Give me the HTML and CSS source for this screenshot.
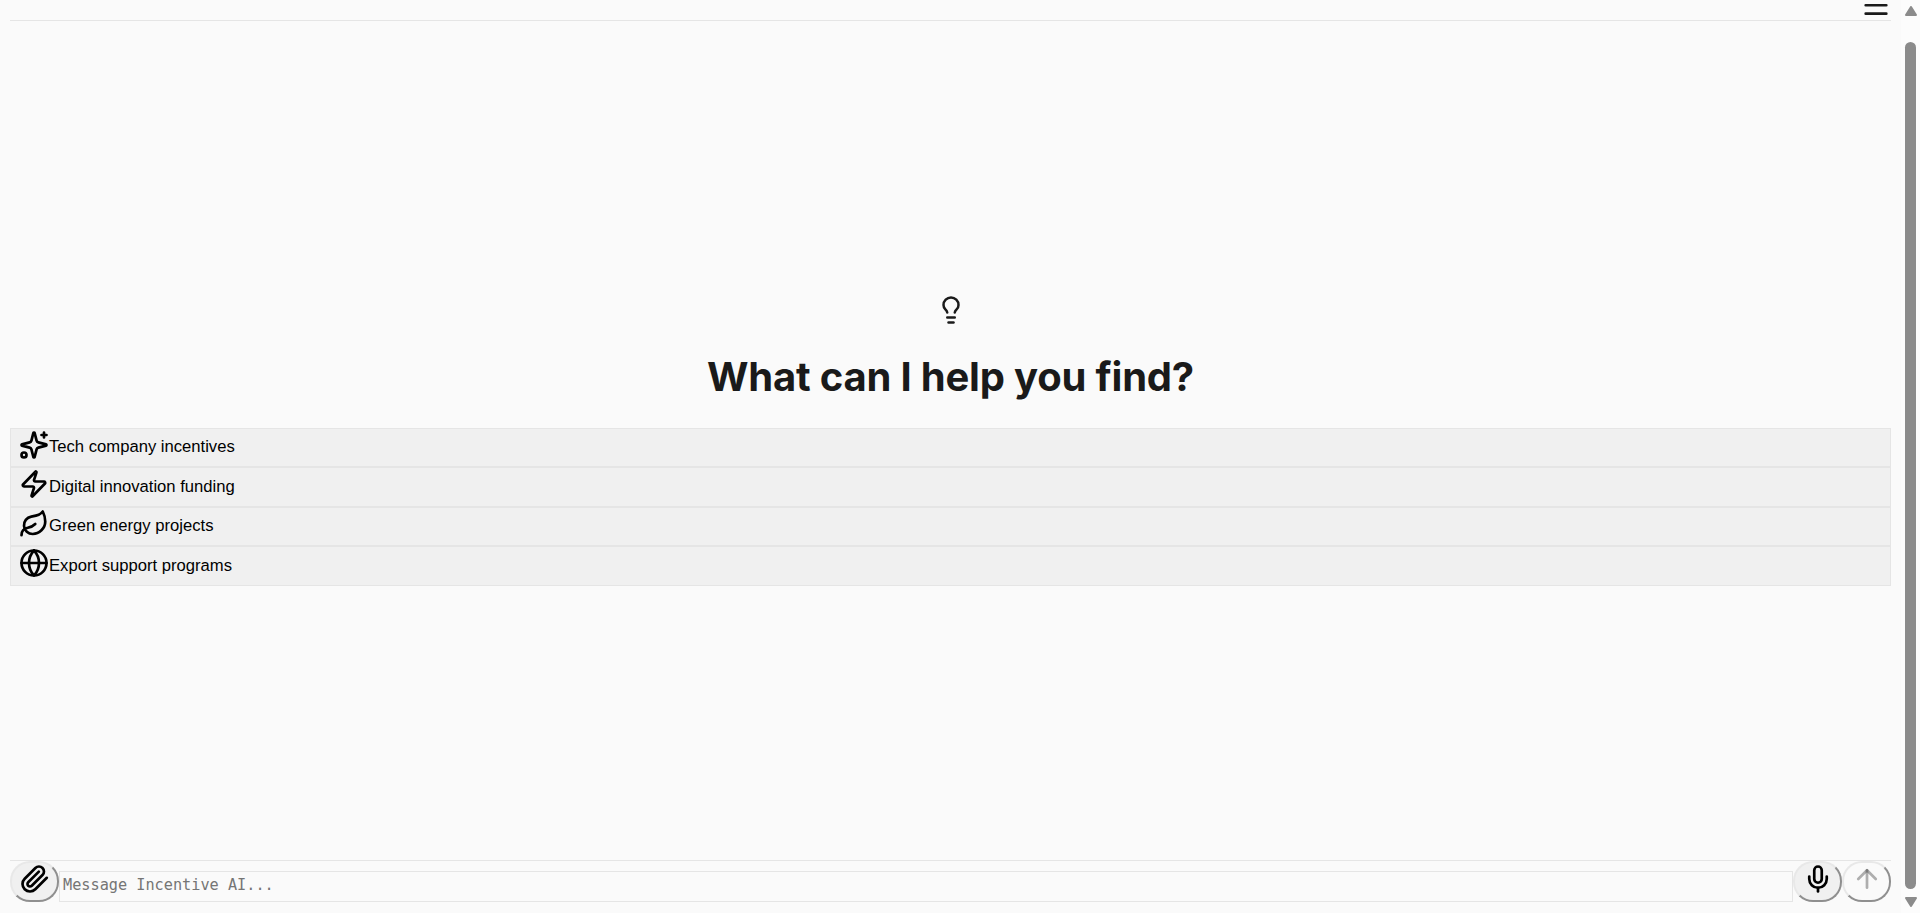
FILE: index.html
```html
<!DOCTYPE html>
<html lang="en">
<head>
<meta charset="utf-8">
<title>Incentive AI</title>
<link rel="stylesheet" href="styles.css">
</head>
<body>
<div class="page">
  <header class="topbar">
    <svg class="icon menu-icon" viewBox="0 0 24 24"><path d="M3.75 9h16.5m-16.5 6.75h16.5"/></svg>
  </header>
  <main class="welcome">
    <svg class="icon bulb" viewBox="0 0 24 24"><path d="M15 14c.2-1 .7-1.7 1.5-2.5 1-.9 1.5-2.2 1.5-3.5A6 6 0 0 0 6 8c0 1 .2 2.2 1.5 3.5.7.7 1.3 1.5 1.5 2.5"/><path d="M9 18h6"/><path d="M10 22h4"/></svg>
    <h1 class="title">What can I help you find?</h1>
    <div class="suggestions">
      <button class="suggestion"><svg class="icon" viewBox="0 0 24 24"><path d="M9.937 15.5A2 2 0 0 0 8.5 14.063l-6.135-1.582a.5.5 0 0 1 0-.962L8.5 9.936A2 2 0 0 0 9.937 8.5l1.582-6.135a.5.5 0 0 1 .963 0L14.063 8.5A2 2 0 0 0 15.5 9.937l6.135 1.581a.5.5 0 0 1 0 .964L15.5 14.063a2 2 0 0 0-1.437 1.437l-1.582 6.135a.5.5 0 0 1-.963 0z"/><path d="M20 2v4M22 4h-4"/><circle cx="4" cy="20" r="2"/></svg><span>Tech company incentives</span></button>
      <button class="suggestion suggestion-tall"><svg class="icon" viewBox="0 0 24 24"><path d="M4 14a1 1 0 0 1-.78-1.63l9.9-10.2a.5.5 0 0 1 .86.46l-1.92 6.02A1 1 0 0 0 13 10h7a1 1 0 0 1 .78 1.63l-9.9 10.2a.5.5 0 0 1-.86-.46l1.92-6.02A1 1 0 0 0 11 14z"/></svg><span>Digital innovation funding</span></button>
      <button class="suggestion"><svg class="icon" viewBox="0 0 24 24"><path d="M11 20A7 7 0 0 1 9.8 6.1C15.5 5 17 4.48 19 2c1 2 2 4.18 2 8 0 5.5-4.78 10-10 10Z"/><path d="M2 21c0-3 1.85-5.36 5.08-6C9.5 14.52 12 13 13 12"/></svg><span>Green energy projects</span></button>
      <button class="suggestion suggestion-tall"><svg class="icon" viewBox="0 0 24 24"><circle cx="12" cy="12" r="10"/><path d="M12 2a14.5 14.5 0 0 0 0 20 14.5 14.5 0 0 0 0-20"/><path d="M2 12h20"/></svg><span>Export support programs</span></button>
    </div>
  </main>
  <footer class="composer">
    <button class="round round-attach"><svg class="icon" viewBox="0 0 24 24"><path d="m21.44 11.05-9.19 9.19a6 6 0 0 1-8.49-8.49l8.57-8.57A4 4 0 1 1 18 8.84l-8.59 8.57a2 2 0 0 1-2.83-2.83l8.49-8.48"/></svg></button>
    <textarea class="message" rows="1" placeholder="Message Incentive AI..."></textarea>
    <button class="round"><svg class="icon" viewBox="0 0 24 24"><path d="M12 2a3 3 0 0 0-3 3v7a3 3 0 0 0 6 0V5a3 3 0 0 0-3-3Z"/><path d="M19 10v2a7 7 0 0 1-14 0v-2"/><path d="M12 19v3"/></svg></button>
    <button class="round round-send"><svg class="icon" viewBox="0 0 24 24"><path d="m5 12 7-7 7 7"/><path d="M12 19V5"/></svg></button>
  </footer>
</div>
<div class="scrollbar">
  <svg class="arrow arrow-up" viewBox="0 0 12 10"><path d="M6 1 11 9H1z"/></svg>
  <div class="thumb"></div>
  <svg class="arrow arrow-down" viewBox="0 0 12 10"><path d="M6 9 11 1H1z"/></svg>
</div>
</body>
</html>
```
FILE: styles.css
```css
* { box-sizing: border-box; }
body { margin: 0; height: 913px; display: flex; overflow: hidden; background: #fafafa; color: #1a1a1a; font-family: Inter, sans-serif; }
.page { flex: 1; height: 913px; padding: 0 10px; display: flex; flex-direction: column; }
.icon { display: block; width: 30px; height: 30px; flex: none; fill: none; stroke: currentColor; stroke-width: 2.15; stroke-linecap: round; stroke-linejoin: round; }
.topbar { height: 21px; flex: none; border-bottom: 1px solid #e5e5e5; display: flex; justify-content: flex-end; }
.menu-icon { margin: -6px 0 0; }
.welcome { flex: 1; padding-top: 274px; }
.bulb { margin: 0 auto; stroke-width: 2; }
.title { margin: 27px 0 26px; text-align: center; font-size: 40px; line-height: 50px; font-weight: 700; letter-spacing: -0.2px; }
.suggestions { display: flex; flex-direction: column; }
.suggestion { height: 39px; padding: 1px 8px 0; display: flex; align-items: flex-start; border: 1px solid #e5e5e5; background: #f0f0f0; color: #000; font: 16.64px/19px "Liberation Sans", Arial, sans-serif; text-align: left; }
.suggestion-tall { height: 40px; }
.suggestion span { margin-top: 7px; }
.suggestion-tall span { margin-top: 8px; }
.composer { height: 53px; flex: none; border-top: 1px solid #e5e5e5; display: flex; align-items: flex-start; }
.round { width: 49px; height: 41px; flex: none; padding: 1px 0 0; border: 2px solid; border-color: #e8e8e8 #8f8f8f #8f8f8f #e8e8e8; border-radius: 20px; background: #f0f0f0; color: #000; display: flex; align-items: flex-start; justify-content: center; }
.round-attach { padding-left: 1px; }
.round-send { background: #fafafa; color: rgba(16, 16, 16, 0.32); }
.message { flex: 1; height: 31px; margin: 10px 0 0; padding: 1px 3px; border: 1px solid #e5e5e5; background: transparent; resize: none; overflow: hidden; outline: none; font: 15.23px/24px "DejaVu Sans Mono", monospace; }
.message::placeholder { color: #757575; }
.scrollbar { width: 19px; height: 913px; flex: none; background: #fcfcfc; display: flex; flex-direction: column; align-items: center; }
.arrow { width: 12px; height: 10px; flex: none; fill: #8b8b8b; stroke: #8b8b8b; stroke-width: 2; stroke-linejoin: round; }
.arrow-up { margin-top: 6px; }
.thumb { width: 11px; height: 847px; flex: none; margin: 26px 0 8px; border-radius: 6px; background: #8b8b8b; }
```
